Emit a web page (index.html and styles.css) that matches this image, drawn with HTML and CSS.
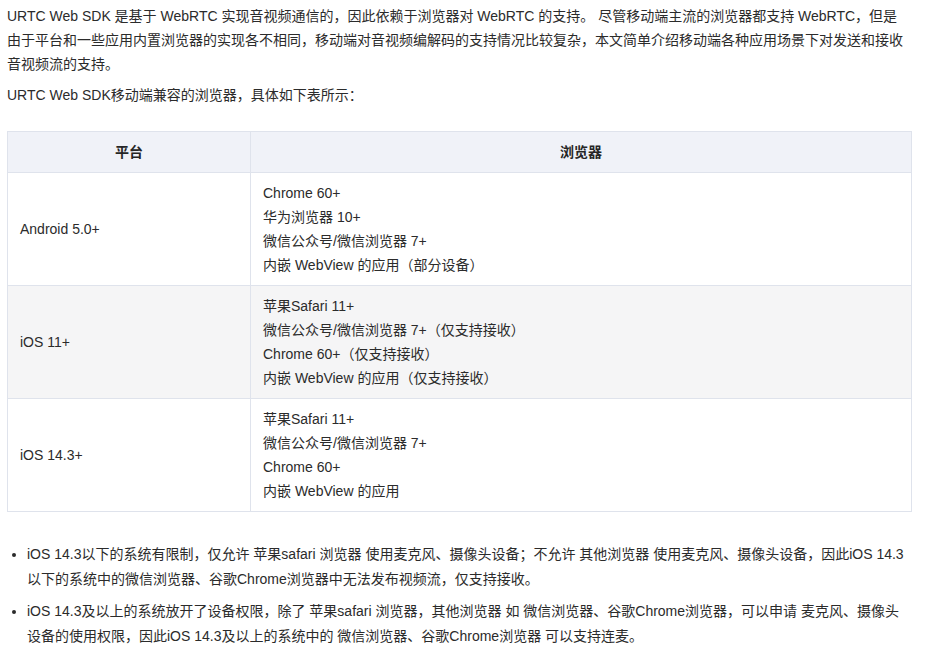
FILE: index.html
```html
<!DOCTYPE html>
<html lang="zh-CN">
<head>
<meta charset="utf-8">
<title>URTC Web SDK</title>
<link rel="stylesheet" href="styles.css">
</head>
<body>
<div class="doc">
  <p class="para lead">URTC Web SDK 是基于 WebRTC 实现音视频通信的，因此依赖于浏览器对 WebRTC 的支持。 尽管移动端主流的浏览器都支持 WebRTC，但是由于平台和一些应用内置浏览器的实现各不相同，移动端对音视频编解码的支持情况比较复杂，本文简单介绍移动端各种应用场景下对发送和接收音视频流的支持。</p>
  <p class="para">URTC Web SDK移动端兼容的浏览器，具体如下表所示：</p>
  <table class="tbl">
    <thead>
      <tr><th class="col1">平台</th><th>浏览器</th></tr>
    </thead>
    <tbody>
      <tr>
        <td>Android 5.0+</td>
        <td><div>Chrome 60+</div><div>华为浏览器 10+</div><div>微信公众号/微信浏览器 7+</div><div>内嵌 WebView 的应用（部分设备）</div></td>
      </tr>
      <tr class="alt">
        <td>iOS 11+</td>
        <td><div>苹果Safari 11+</div><div>微信公众号/微信浏览器 7+（仅支持接收）</div><div>Chrome 60+（仅支持接收）</div><div>内嵌 WebView 的应用（仅支持接收）</div></td>
      </tr>
      <tr>
        <td>iOS 14.3+</td>
        <td><div>苹果Safari 11+</div><div>微信公众号/微信浏览器 7+</div><div>Chrome 60+</div><div>内嵌 WebView 的应用</div></td>
      </tr>
    </tbody>
  </table>
  <ul class="notes">
    <li>iOS 14.3以下的系统有限制，仅允许 苹果safari 浏览器 使用麦克风、摄像头设备；不允许 其他浏览器 使用麦克风、摄像头设备，因此iOS 14.3以下的系统中的微信浏览器、谷歌Chrome浏览器中无法发布视频流，仅支持接收。</li>
    <li>iOS 14.3及以上的系统放开了设备权限，除了 苹果safari 浏览器，其他浏览器 如 微信浏览器、谷歌Chrome浏览器，可以申请 麦克风、摄像头设备的使用权限，因此iOS 14.3及以上的系统中的 微信浏览器、谷歌Chrome浏览器 可以支持连麦。</li>
  </ul>
</div>
</body>
</html>
```
FILE: styles.css
```css
* { box-sizing: border-box; }
html, body { margin: 0; padding: 0; background: #fff; }
body {
  font-family: "Liberation Sans", "Noto Sans CJK SC", sans-serif;
  font-size: 14px;
  line-height: 24px;
  color: #2b2b2b;
}
.doc {
  padding: 4px 15px 0 7px;
}
.para {
  margin: 0 0 7px 0;
}
.lead {
  margin-right: 5px;
}
.tbl {
  width: 100%;
  border-collapse: collapse;
  margin-top: 24px;
}
.tbl th, .tbl td {
  border: 1px solid #dfe3ec;
  padding: 0 12px;
  text-align: left;
  vertical-align: middle;
}
.tbl th {
  background: #f0f2f8;
  font-weight: bold;
  text-align: center;
  height: 41px;
  color: #262626;
}
.tbl th.col1 { width: 243px; }
.tbl td { padding-top: 8px; padding-bottom: 8px; height: 113px; }
.tbl tr.alt td { background: #f5f5f6; }
.notes {
  margin: 30px 0 0 0;
  padding: 0 0 0 20px;
}
.notes li {
  margin-bottom: 8px;
  line-height: 24.5px;
}
```
